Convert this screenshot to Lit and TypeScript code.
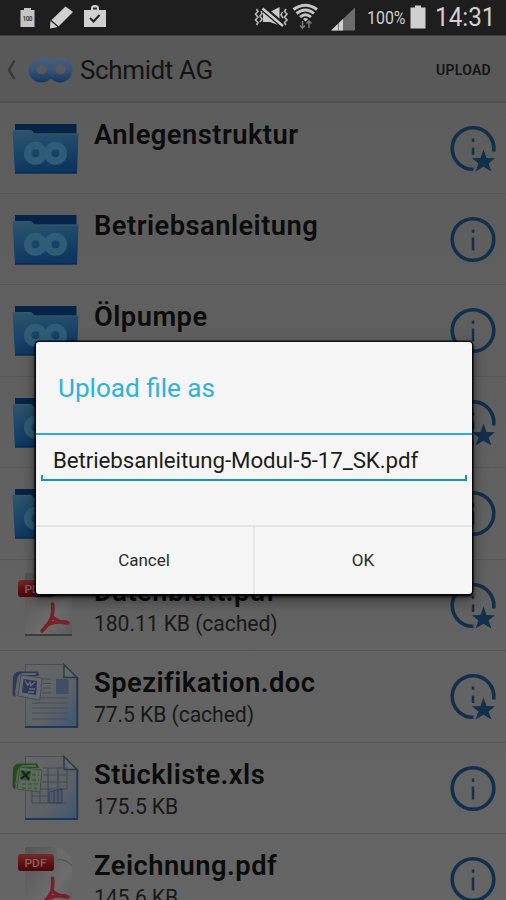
import { LitElement, html, css, svg, nothing } from "lit";
import { customElement, property } from "lit/decorators.js";

type Kind = "folder" | "pdf" | "doc" | "xls";
interface Entry { name: string; kind: Kind; size?: string; starred?: boolean; }

const entries: Entry[] = [
  { name: "Anlegenstruktur", kind: "folder", starred: true },
  { name: "Betriebsanleitung", kind: "folder" },
  { name: "Ölpumpe", kind: "folder" },
  { name: "", kind: "folder", starred: true },
  { name: "", kind: "folder" },
  { name: "Datenblatt.pdf", kind: "pdf", size: "180.11 KB (cached)", starred: true },
  { name: "Spezifikation.doc", kind: "doc", size: "77.5 KB (cached)", starred: true },
  { name: "Stückliste.xls", kind: "xls", size: "175.5 KB" },
  { name: "Zeichnung.pdf", kind: "pdf", size: "145.6 KB" },
];

const folder = svg`
  <defs>
    <linearGradient id="front" x1="0" y1="0" x2=".25" y2="1">
      <stop offset="0" stop-color="#2f566c"/><stop offset=".45" stop-color="#1e486a"/><stop offset="1" stop-color="#0c365f"/>
    </linearGradient>
  </defs>
  <path d="M3 2H64.500V20H3z" fill="#052448"/>
  <path d="M.5 8H19L22.500 11.500H66.500L65 51.500H3z" fill="url(#front)"/>
  <path d="M1 8.500H19L22.500 12H66" fill="none" stroke="#33596c" stroke-width="1"/>
  <path d="M3 50.700H65" stroke="#092c52" stroke-width="1.600"/>
  <g fill="none" stroke="#2f5d77" stroke-width="7.500"><circle cx="23.500" cy="31.300" r="7.800"/><circle cx="43.500" cy="31.300" r="7.800"/></g>`;

const pdf = svg`
  <defs>
    <linearGradient id="page" x1="0" y1="0" x2="1" y2="1"><stop offset="0" stop-color="#555"/><stop offset=".3" stop-color="#606060"/><stop offset=".65" stop-color="#6d6d6d"/><stop offset="1" stop-color="#5a5a5a"/></linearGradient>
    <linearGradient id="tag" x1="0" y1="0" x2="0" y2="1"><stop offset="0" stop-color="#742a2c"/><stop offset=".55" stop-color="#600f12"/><stop offset="1" stop-color="#4a090c"/></linearGradient>
  </defs>
  <path d="M14 1H43Q50 1 55 7Q60 13 60 20V63H13V3Q13 1 14 1z" fill="url(#page)"/>
  <path d="M43 1Q47 8 45 14Q53 12 60 20Q60 13 55 7Q50 1 43 1z" fill="#6a6a6a"/>
  <path d="M45 14Q53 12 60 20" fill="none" stroke="#4c4c4c" stroke-width="1"/>
  <path d="M13 63H60" stroke="#3c3c3c" stroke-width="1.800"/>
  <rect x="6" y="8" width="36" height="17" rx="3" fill="url(#tag)"/>
  <text x="12.500" y="20.500" font-family="Roboto, sans-serif" font-weight="500" font-size="11.500" textLength="22" lengthAdjust="spacingAndGlyphs" fill="#876262">PDF</text>
  <path d="M40.500 32Q41.500 40 39.500 46Q37 52 30 59M40.500 45Q46 50.500 56 51M34 53.500Q43 49 54 50" fill="none" stroke="#7a2028" stroke-width="3.600" stroke-linecap="round"/>`;

const sheet = svg`
  <defs><linearGradient id="sheet" x1="0" y1="0" x2="1" y2="1"><stop offset="0" stop-color="#666"/><stop offset=".6" stop-color="#5f6265"/><stop offset="1" stop-color="#3f5674"/></linearGradient></defs>
  <path d="M13.500 1.500H52L65 14.500V64H13.500z" fill="url(#sheet)" stroke="#45505b" stroke-width="1"/>
  <path d="M65.300 14V64H13" fill="none" stroke="#1f3858" stroke-width="1.800"/>
  <path d="M52 1.500V14.500H65z" fill="#62686d" stroke="#2c3845" stroke-width="1.400"/>`;

const doc = svg`${sheet}
  <path d="M31 16H39M31 20.500H39M31 25H39M30 30H39M20 35H56M20 40H56M20 45H56M20 50H56M20 56H56" stroke="#434f60" stroke-width="1.100"/>
  <rect x="44" y="16" width="12.500" height="15" fill="#404f66"/>
  <path d="M1 14Q2 9.500 7 8.500H26L27 13H10Q6 13 6 19L3 34L.5 32z" fill="#2b3a56"/>
  <path d="M4 30L6 16Q7 11.500 12 11H24" fill="none" stroke="#5d6571" stroke-width="1.800"/>
  <path d="M9 12L30 15L28 37L6 33z" fill="#66696f" stroke="#454b57" stroke-width="1"/>
  <path d="M11.500 16L25 18L24 32L10 29.500z" fill="#30375a"/>
  <path d="M13 17.500L16 22.500L18 19L19 22.500L23 19M17 26H23M16 29H22" fill="none" stroke="#686c78" stroke-width="1.300"/>`;

const xls = svg`${sheet}
  <path d="M31 13H55V34M31 20H55M30 27H55M20 34H55M20 41H50M20 48H54M20 34V48M28 37V48M36 13V48M46 13V48M55 13V34" fill="none" stroke="#3c4b5b" stroke-width="1.200"/>
  <path d="M37 37L50 34V48H37zM42 37V48M46 35V48" fill="#4e5a69" stroke="#2c405a" stroke-width="1"/>
  <path d="M1 14Q2 9 7 8.500H25L27 13H11Q6 13 6 19L3 35L.5 32z" fill="#274921"/>
  <path d="M4 30L6 17Q7 12 12 11H24" fill="none" stroke="#4e6a49" stroke-width="1.800"/>
  <path d="M8 12L30 15L28 37L5 34z" fill="#5e695d" stroke="#3d513a" stroke-width="1"/>
  <path d="M9 15L19 16.500L17.500 26L8 24z" fill="#3c5438"/>
  <path d="M10 16L17 24.500M18 16.500L9 24" stroke="#122b11" stroke-width="2.200"/>
  <path d="M20 20H27M20 25H27M10 29H26M10 33H25" stroke="#435741" stroke-width="1.500" stroke-dasharray="4 2"/>`;

@customElement("info-mark")
class InfoMark extends LitElement {
  @property({ type: Boolean }) starred = false;
  static styles = css`:host{display:block;width:46px;height:52px}svg{display:block}`;
  render() {
    return html`<svg width="46" height="52" viewBox="0 0 46 52" fill="none" stroke="#12304c">
      ${this.starred
        ? svg`<path d="M23.500 44.300A20.800 20.800 0 1 1 43.600 26.500" stroke-width="3.600"/>
              <path d="M23 13.500V16.700M23 22.500V30" stroke-width="2.500"/>
              <path d="M33.500 24.500L36.500 33L45 33.200L38.500 38.500L41.500 46.500L33.500 41.800L25.500 46.500L28.500 38.500L22 33.200L30.500 33z" fill="#12304c" stroke="none"/>`
        : svg`<circle cx="23" cy="23.500" r="20.800" stroke-width="3.600"/>
              <path d="M23 13.500V16.700M23 21.500V34.500" stroke-width="2.500"/>`}
    </svg>`;
  }
}

@customElement("file-row")
class FileRow extends LitElement {
  @property({ attribute: false }) entry!: Entry;
  static styles = css`
    :host{display:flex;box-sizing:border-box;height:91.45px;border-bottom:1px solid rgba(78,78,78,.45);padding-left:12px;flex:none}
    .art{width:82px;flex:none;padding-top:19px}
    .art.file{padding-top:12px}
    svg{display:block;overflow:visible}
    .text{flex:1;min-width:0;white-space:nowrap;padding-top:15px;color:#0c0c0c}
    .name{font-size:27.3px;line-height:34px;font-weight:600;letter-spacing:.48px}
    .size{font-size:21.2px;line-height:28px;margin-top:1px;letter-spacing:-.1px;color:#191919}
    .mark{width:56px;flex:none;padding-top:22px}
  `;
  render() {
    const e = this.entry;
    const art = { folder, pdf, doc, xls }[e.kind];
    return html`
      <div class="art ${e.kind === "folder" ? "" : "file"}"><svg width="67" height="66" viewBox="0 0 67 66">${art}</svg></div>
      <div class="text"><div class="name">${e.name}</div>${e.size ? html`<div class="size">${e.size}</div>` : nothing}</div>
      <div class="mark"><info-mark ?starred=${!!e.starred}></info-mark></div>`;
  }
}

@customElement("upload-dialog")
class UploadDialog extends LitElement {
  static styles = css`
    :host{display:flex;flex-direction:column;box-sizing:border-box;width:436px;height:252px;background:#f5f5f5;border-radius:3px;
      box-shadow:0 0 0 1.5px rgba(0,0,0,.75),0 2px 3px 1px rgba(0,0,0,.75),0 5px 14px 2px rgba(0,0,0,.4)}
    .title{height:93px;box-sizing:border-box;padding:29px 0 0 22px;border-bottom:2px solid #29ade0;color:#2fb2de;font-size:26.1px;line-height:34px;flex:none}
    .body{flex:1;padding:0 5px}
    .field{height:46px;box-sizing:border-box;position:relative;padding:11px 0 0 12px;font-size:22.3px;line-height:29px;letter-spacing:-.08px;color:#1c1c1c;border-bottom:2px solid #1b91bd;white-space:nowrap}
    .field::before,.field::after{content:"";position:absolute;bottom:0;width:2px;height:4px;background:#1b91bd}
    .field::before{left:0}.field::after{right:0}
    .actions{display:flex;height:69px;box-sizing:border-box;border-top:2px solid #e2e2e2;flex:none}
    .btn{flex:1;display:flex;align-items:center;justify-content:center;font-size:17px;color:#2b2b2b;padding:0 1px 1px 0}
    .btn + .btn{border-left:2px solid #e5e5e5}
  `;
  render() {
    return html`<div class="title">Upload file as</div>
      <div class="body"><div class="field">Betriebsanleitung-Modul-5-17_SK.pdf</div></div>
      <div class="actions"><div class="btn">Cancel</div><div class="btn">OK</div></div>`;
  }
}

@customElement("app-root")
class AppRoot extends LitElement {
  static styles = css`
    :host{display:flex;flex-direction:column;position:relative;width:506px;height:900px;overflow:hidden;font-family:Roboto,"Liberation Sans",sans-serif;background:linear-gradient(#5c5c5c,#656565)}
    .status{height:36px;flex:none;background:#1e1e1e;display:flex;align-items:center;border-bottom:1px solid #3a3a3a;box-sizing:border-box}
    svg{display:block;flex:none}
    .bar{height:66.500px;flex:none;box-sizing:border-box;border-bottom:2px solid #515151;display:flex;align-items:center;color:#141414;background:#595959}
    .heading{font-size:26px;margin-left:6px;flex:1;padding-top:4px;letter-spacing:-.38px}
    .upload{font-size:14px;font-weight:600;letter-spacing:.3px;margin-right:15px;padding-top:3px}
    .dialog{position:absolute;left:36px;top:342px}
    .list{display:flex;flex-direction:column;flex:1;min-height:0;overflow:hidden}
  `;
  render() {
    return html`
      <div class="status">
        <svg width="253" height="35" viewBox="0 0 253 35">
          <path d="M20.500 10H24V8H31V10H34.500V27H20.500z" fill="#c5c5c5"/>
          <text x="22.500" y="21" font-size="6.500" font-weight="700" textLength="10" fill="#444">100</text>
          <path d="M50.500 21L65.500 6.500L73 12L58 27L50 28.500z" fill="#d0d0d0"/><path d="M51 20.500L58.500 27" stroke="#222" stroke-width="1.300"/>
          <path d="M84 10H91V8Q91 5 95 5T99 8V10H106V27H84z" fill="#d0d0d0"/><rect x="93" y="7.500" width="4" height="2" fill="#222"/>
          <path d="M90 18L93.500 21.500L99.500 15" fill="none" stroke="#222" stroke-width="2"/>
        </svg>
        <svg width="253" height="35" viewBox="253 0 253 35">
          <path d="M263 12H270L279.500 7V25.500L270 22H263z" fill="#cacaca"/><path d="M263.500 6.500L285 25" stroke="#1e1e1e" stroke-width="2.600"/><path d="M261.500 9.800L282 27.300" stroke="#1e1e1e" stroke-width="2"/><path d="M262.500 8.500L283 26" stroke="#ccc" stroke-width="2.400"/>
          <path d="M256.500 9L258 11.500L255.500 14L258 17L255.500 20L258 22.500L256.500 25M261 11L262 13.500L260 16L262 19L260 22M286 9L284.500 11.500L287 14L284.500 17L287 20L284.500 22.500L286 25M282.500 12L281 15L283 18" fill="none" stroke="#bbb" stroke-width="1.600"/>
          <path d="M293.500 9.500Q305.500 1 317 9.500M296.500 13.500Q305.500 6.500 314 13.500M300 17Q305.500 12.500 311 17" fill="none" stroke="#c6c6c6" stroke-width="2.900"/><path d="M303 19Q305.500 17 308 19L305.500 21.500z" fill="#ccc"/>
          <path d="M302.500 21V28M300 25.500L302.500 28L305 25.500M309 28V21M306.500 23.500L309 21L311.500 23.500" fill="none" stroke="#777" stroke-width="1.600"/>
          <path d="M331 30.500L355 7.500V30.500z" fill="#6c6c6c"/><path d="M331 30.500L343 19V30.500z" fill="#d1d1d1"/><path d="M338.500 23V31" stroke="#777" stroke-width="1"/>
          <text x="367" y="24" font-size="17.500" textLength="38.500" lengthAdjust="spacingAndGlyphs" fill="#cfcfcf">100%</text>
          <path d="M410.500 7.500H415V5.500H421V7.500H425.500V28.500H410.500z" fill="#d0d0d0"/>
          <text x="435" y="26" font-size="26" textLength="60.500" lengthAdjust="spacingAndGlyphs" fill="#d2d2d2">14:31</text>
        </svg>
      </div>
      <div class="bar">
        <svg width="74" height="64" viewBox="0 0 74 64">
          <defs><linearGradient id="rings" x1="0" y1="0" x2="0" y2="1"><stop offset="0" stop-color="#4c5f78"/><stop offset=".5" stop-color="#34547a"/><stop offset="1" stop-color="#17375f"/></linearGradient></defs>
          <path d="M14.500 24.500L9 34L14.500 43" fill="none" stroke="#3a3a3a" stroke-width="2.400"/>
          <path fill="url(#rings)" fill-rule="evenodd" d="M41 21.500A12.500 12.500 0 1 0 41 46.500Q47 46.500 51 42.500Q55 46.500 60 46.500A12.500 12.500 0 1 0 60 21.500Q55 21.500 51 25.500Q47 21.500 41 21.500zM41.500 28.500A5 5 0 1 1 41.500 38.500A5 5 0 1 1 41.500 28.500zM60.500 28.500A5 5 0 1 1 60.500 38.500A5 5 0 1 1 60.500 28.500z"/>
        </svg>
        <span class="heading">Schmidt AG</span><span class="upload">UPLOAD</span>
      </div>
      <div class="list">${entries.map((e) => html`<file-row .entry=${e}></file-row>`)}</div>
      <upload-dialog class="dialog"></upload-dialog>`;
  }
}
